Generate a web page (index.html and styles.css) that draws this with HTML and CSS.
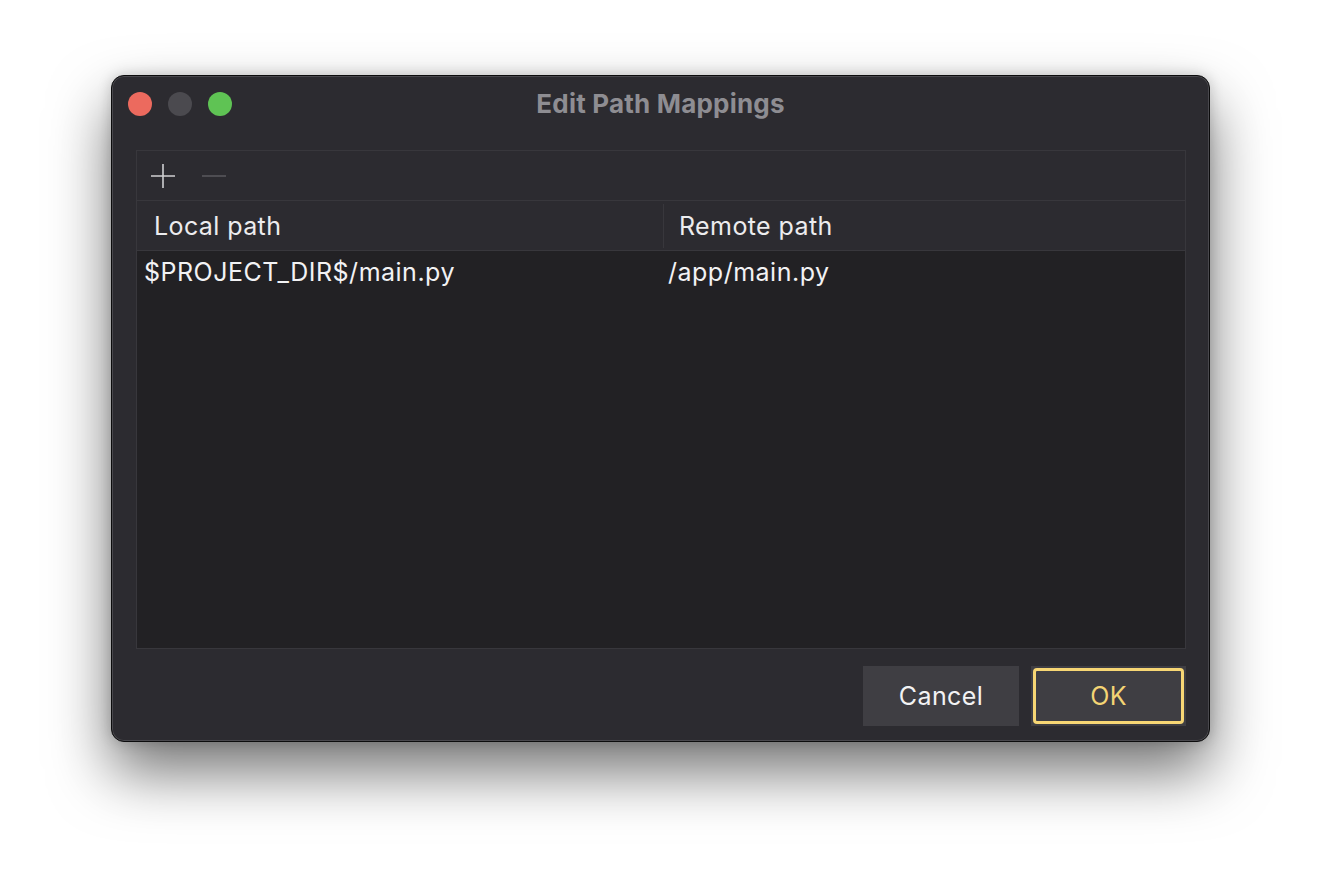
FILE: index.html
```html
<!DOCTYPE html>
<html>
<head>
<meta charset="utf-8">
<link rel="stylesheet" href="styles.css">
</head>
<body>
<div class="stage">
  <div class="window">
    <div class="titlebar">
      <div class="lights">
        <span class="light red"></span>
        <span class="light gray"></span>
        <span class="light green"></span>
      </div>
      <div class="title">Edit Path Mappings</div>
    </div>
    <div class="content">
      <div class="panel">
        <div class="toolbar">
          <svg class="tool" width="26" height="26" viewBox="0 0 26 26"><path d="M13 1V25M1 13H25" stroke="#cfcfd1" stroke-width="1.6" fill="none"/></svg>
          <svg class="tool" width="26" height="26" viewBox="0 0 26 26"><path d="M1 13H25" stroke="#58575c" stroke-width="1.6" fill="none"/></svg>
        </div>
        <div class="header">
          <div class="hcell first">Local path</div>
          <div class="hsep"></div>
          <div class="hcell second">Remote path</div>
        </div>
        <div class="rows">
          <div class="row">
            <div class="cell first">$PROJECT_DIR$/main.py</div>
            <div class="cell second">/app/main.py</div>
          </div>
        </div>
      </div>
      <div class="buttons">
        <button class="btn">Cancel</button>
        <button class="btn ok"><span class="ring">OK</span></button>
      </div>
    </div>
  </div>
</div>
</body>
</html>
```
FILE: styles.css
```css
html, body {
  margin: 0;
  padding: 0;
  background: #ffffff;
}
body {
  width: 1322px;
  height: 890px;
  overflow: hidden;
  font-family: Inter, "Liberation Sans", sans-serif;
}
.stage {
  padding: 75px 0 0 111px;
}
.window {
  width: 1097px;
  height: 665px;
  background: #2c2b30;
  border: 1px solid #0c0c0d;
  border-radius: 13px;
  box-shadow: inset 0 0 0 1px rgba(255,255,255,0.14), 0 30px 60px rgba(0,0,0,0.55), 0 0 14px rgba(0,0,0,0.18);
  display: flex;
  flex-direction: column;
}
.titlebar {
  height: 74px;
  position: relative;
  display: flex;
  justify-content: center;
}
.lights {
  position: absolute;
  left: 16px;
  top: 16px;
  display: flex;
  gap: 16px;
}
.light {
  width: 24px;
  height: 24px;
  border-radius: 50%;
  display: block;
}
.red { background: #ec6a5e; }
.gray { background: #4b4a4f; }
.green { background: #5fc354; }
.title {
  margin-top: 12px;
  font-size: 26px;
  font-weight: 700;
  letter-spacing: 0.2px;
  color: #8e8d92;
  line-height: 32px;
}
.content {
  flex: 1;
  display: flex;
  flex-direction: column;
  padding: 0 23px 15px 24px;
}
.panel {
  height: 497px;
  border: 1px solid #38373c;
  display: flex;
  flex-direction: column;
  background: #222124;
}
.toolbar {
  height: 49px;
  background: #2c2b30;
  border-bottom: 1px solid #38373c;
  display: flex;
  align-items: center;
  padding-left: 13px;
  gap: 25px;
}
.header {
  height: 49px;
  background: #2c2b30;
  border-bottom: 1px solid #38373c;
  display: flex;
  align-items: center;
  color: #ececee;
  font-size: 25px;
  letter-spacing: 0.4px;
}
.hcell.first {
  width: 509px;
  padding-left: 17px;
}
.hsep {
  width: 1px;
  height: 44px;
  background: #38373c;
}
.hcell.second {
  padding-left: 15px;
}
.rows {
  flex: 1;
}
.row {
  display: flex;
  height: 42px;
  align-items: center;
  color: #f2f2f4;
  font-size: 25px;
  letter-spacing: 0.5px;
}
.cell.first {
  width: 518px;
  padding-left: 7px;
}
.cell.second {
  padding-left: 6px;
}
.buttons {
  margin-top: 17px;
  display: flex;
  justify-content: flex-end;
  gap: 12px;
}
.btn {
  height: 60px;
  width: 156px;
  background: #3f3e43;
  border: none;
  border-radius: 0;
  color: #f2f2f4;
  font-family: Inter, "Liberation Sans", sans-serif;
  font-size: 25px;
  letter-spacing: 0.4px;
  padding: 0;
  display: flex;
  align-items: center;
  justify-content: center;
}
.btn.ok {
  width: 155px;
  padding: 2px;
}
.ring {
  flex: 1;
  align-self: stretch;
  border: 3px solid #f7d674;
  border-radius: 4px;
  color: #f3d474;
  display: flex;
  align-items: center;
  justify-content: center;
}
```
